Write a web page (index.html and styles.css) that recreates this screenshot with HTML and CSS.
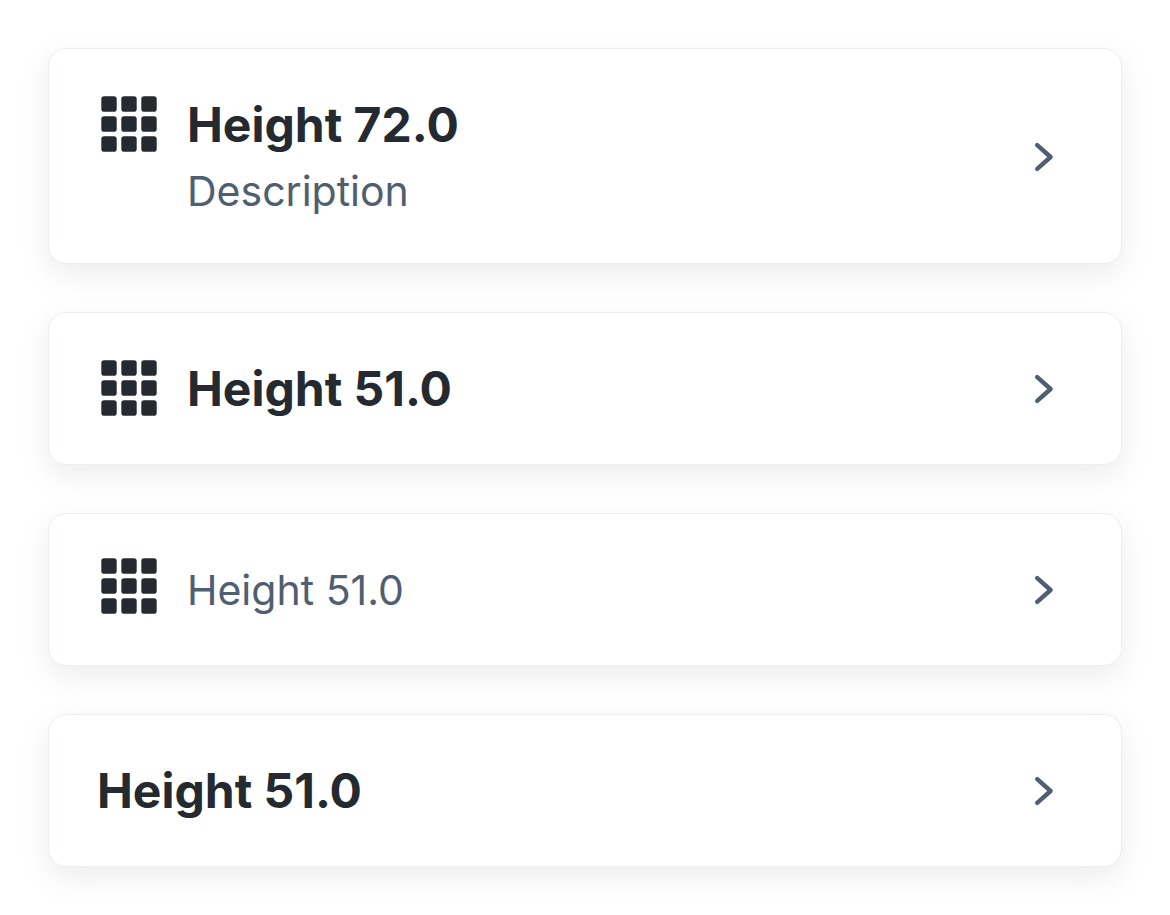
FILE: index.html
```html
<!DOCTYPE html>
<html lang="en">
<head>
<meta charset="utf-8">
<meta name="viewport" content="width=device-width, initial-scale=1">
<title>Tiles</title>
<link rel="stylesheet" href="styles.css">
</head>
<body>
<svg class="sprite" aria-hidden="true">
  <symbol id="grid" viewBox="0 0 56 56">
    <rect x="0.3" y="0.3" width="15.4" height="15.4" rx="2.8"/><rect x="20.3" y="0.3" width="15.4" height="15.4" rx="2.8"/><rect x="40.3" y="0.3" width="15.4" height="15.4" rx="2.8"/>
    <rect x="0.3" y="20.3" width="15.4" height="15.4" rx="2.8"/><rect x="20.3" y="20.3" width="15.4" height="15.4" rx="2.8"/><rect x="40.3" y="20.3" width="15.4" height="15.4" rx="2.8"/>
    <rect x="0.3" y="40.3" width="15.4" height="15.4" rx="2.8"/><rect x="20.3" y="40.3" width="15.4" height="15.4" rx="2.8"/><rect x="40.3" y="40.3" width="15.4" height="15.4" rx="2.8"/>
  </symbol>
  <symbol id="chevron" viewBox="0 0 20 30">
    <path d="M3.2 3.2 L16.6 15 L3.2 26.8"/>
  </symbol>
</svg>
<main class="tiles">
  <button class="tile" type="button">
    <svg class="grid" aria-hidden="true"><use href="#grid"/></svg>
    <span class="text"><span class="title">Height 72.0</span><span class="description">Description</span></span>
    <svg class="chevron" aria-hidden="true"><use href="#chevron"/></svg>
  </button>
  <button class="tile" type="button">
    <svg class="grid" aria-hidden="true"><use href="#grid"/></svg>
    <span class="text"><span class="title">Height 51.0</span></span>
    <svg class="chevron" aria-hidden="true"><use href="#chevron"/></svg>
  </button>
  <button class="tile tile-plain" type="button">
    <svg class="grid" aria-hidden="true"><use href="#grid"/></svg>
    <span class="text"><span class="description">Height 51.0</span></span>
    <svg class="chevron" aria-hidden="true"><use href="#chevron"/></svg>
  </button>
  <button class="tile" type="button">
    <span class="text"><span class="title">Height 51.0</span></span>
    <svg class="chevron" aria-hidden="true"><use href="#chevron"/></svg>
  </button>
</main>
</body>
</html>
```
FILE: styles.css
```css
* {
  box-sizing: border-box;
}

body {
  margin: 0;
  background: #fff;
  font-family: Inter, "Liberation Sans", sans-serif;
}

.sprite {
  position: absolute;
  width: 0;
  height: 0;
}

.tiles {
  display: flex;
  flex-direction: column;
  gap: 48px;
  padding: 48px;
}

.tile {
  display: flex;
  align-items: center;
  width: 100%;
  min-height: 153px;
  padding: 44px 67px 43px 48px;
  border: 1px solid #eceef1;
  border-radius: 18px;
  background: #fff;
  box-shadow: 0 10px 32px rgba(0, 0, 0, 0.08);
  font: inherit;
  text-align: left;
  cursor: pointer;
}

.grid {
  flex: none;
  align-self: flex-start;
  width: 56px;
  height: 56px;
  margin: 3px 30px 0 4px;
  fill: #252a31;
}

.tile-plain .grid {
  margin-top: 0;
}

.text {
  display: flex;
  flex: 1;
  flex-direction: column;
  gap: 5px;
}

.title {
  color: #252a31;
  font-size: 48px;
  font-weight: 700;
  line-height: 64px;
}

.description {
  color: #4f5e71;
  font-size: 41px;
  line-height: 58px;
}

.chevron {
  flex: none;
  width: 20px;
  height: 30px;
  fill: none;
  stroke: #4f5e71;
  stroke-width: 4.4;
  stroke-linecap: round;
  stroke-linejoin: round;
}
```
